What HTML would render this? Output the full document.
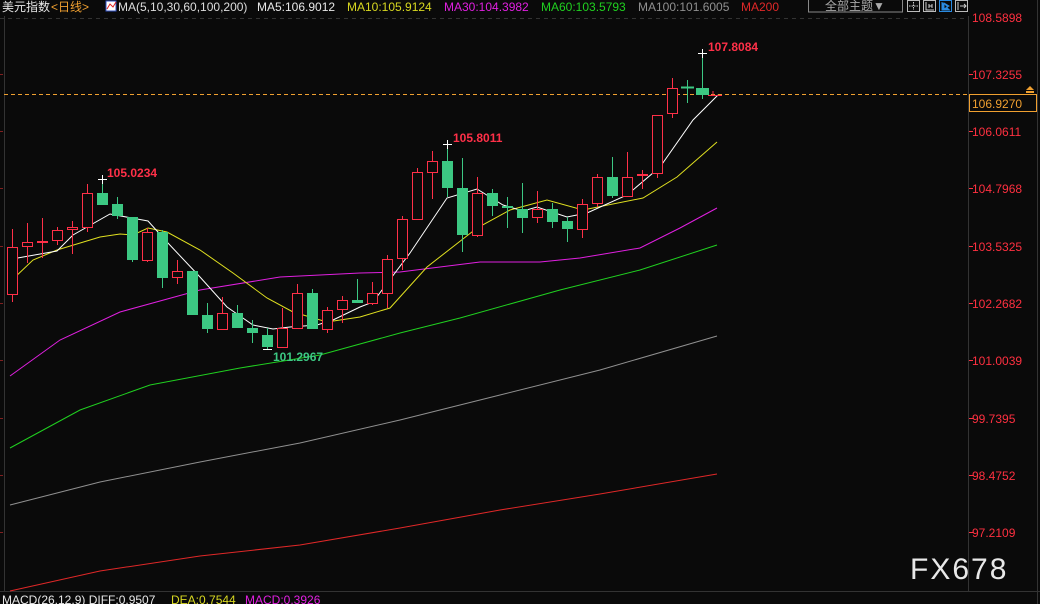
<!DOCTYPE html>
<html><head><meta charset="utf-8"><style>
html,body{margin:0;padding:0;background:#0a0a0a;width:1040px;height:604px;overflow:hidden}
svg{display:block}
text{font-family:"Liberation Sans","Noto Sans CJK SC",sans-serif}
</style></head><body>
<svg width="1040" height="604" viewBox="0 0 1040 604" xmlns="http://www.w3.org/2000/svg">
<rect width="1040" height="604" fill="#0a0a0a"/>
<!-- header -->
<text x="2" y="11" font-size="12" fill="#e8e8e8">美元指数</text>
<text x="51" y="11" font-size="12" fill="#f0a030">&lt;日线&gt;</text>
<rect x="106" y="1" width="10" height="10" fill="#fff" stroke="#3050c0"/>
<polyline points="107,9 110,4 113,7 116,2" fill="none" stroke="#e02020"/>
<text x="118" y="11" font-size="12" fill="#dddddd">MA(5,10,30,60,100,200)</text>
<text x="257" y="11" font-size="12" fill="#e8e8e8">MA5:106.9012</text>
<text x="347" y="11" font-size="12" fill="#d8d820">MA10:105.9124</text>
<text x="444" y="11" font-size="12" fill="#e020e0">MA30:104.3982</text>
<text x="541" y="11" font-size="12" fill="#20d020">MA60:103.5793</text>
<text x="638" y="11" font-size="12" fill="#909090">MA100:101.6005</text>
<text x="741" y="11" font-size="12" fill="#e02828">MA200</text>
<rect x="808.5" y="-1" width="94" height="13" fill="none" stroke="#888"/>
<text x="825" y="10" font-size="12" fill="#aaa">全部主题▼</text>
<rect x="907.5" y="0.5" width="12" height="11" fill="none" stroke="#bbb"/>
<path d="M913.5 2v8M909 6h9" stroke="#ccc" stroke-dasharray="1.5 1"/>
<rect x="923.5" y="0.5" width="12" height="11" fill="none" stroke="#bbb"/>
<path d="M926 2v8h8M929 4v4M932 4v4M929 6h3" stroke="#ccc" fill="none"/>
<rect x="939.5" y="0.5" width="12" height="11" fill="none" stroke="#2a8ae0"/>
<path d="M942 2v8h8M944 3l5 3-5 3z" stroke="#2a8ae0" fill="#2a8ae0"/>
<rect x="955.5" y="0.5" width="12" height="11" fill="none" stroke="#bbb"/>
<path d="M958 2v8M960 6h6M964 4l2 2-2 2" stroke="#ccc" fill="none"/>
<line x1="0" y1="18.5" x2="968" y2="18.5" stroke="#333" stroke-dasharray="4 4"/>
<!-- axes -->
<line x1="4.5" y1="16" x2="4.5" y2="591" stroke="#333"/>
<line x1="968.5" y1="16" x2="968.5" y2="591" stroke="#333"/>
<line x1="1037.5" y1="0" x2="1037.5" y2="604" stroke="#333"/>
<line x1="0" y1="591.5" x2="1040" y2="591.5" stroke="#333"/>
<g fill="#ff3040" font-size="12">
<text x="972" y="22">108.5898</text>
<text x="972" y="79">107.3255</text>
<text x="972" y="136">106.0611</text>
<text x="972" y="193">104.7968</text>
<text x="972" y="251">103.5325</text>
<text x="972" y="308">102.2682</text>
<text x="972" y="365">101.0039</text>
<text x="972" y="423">99.7395</text>
<text x="972" y="480">98.4752</text>
<text x="972" y="537">97.2109</text>
</g>
<g stroke="#ff3040"><path d="M969 74.5h4M969 131.5h4M969 188.5h4M969 246.5h4M969 303.5h4M969 360.5h4M969 418.5h4M969 475.5h4M969 532.5h4"/></g>
<g stroke="#802020"><path d="M0 74.5h3M0 131.5h3M0 188.5h3M0 246.5h3M0 303.5h3M0 360.5h3M0 418.5h3M0 475.5h3M0 532.5h3"/></g>
<!-- current price -->
<line x1="4" y1="94.5" x2="968" y2="94.5" stroke="#f0a030" stroke-dasharray="4 3"/>
<rect x="969.5" y="94.5" width="67" height="17" fill="#0a0a0a" stroke="#f0a030"/>
<text x="972" y="108" font-size="12" fill="#f0a030">106.9270</text>
<path d="M1030 86l4 4h-8zM1026 91h8v2h-8z" fill="#f0a030"/>
<!-- MA lines -->
<g fill="none" stroke-width="1">
<polyline stroke="#e02828" points="10,591 100,571 200,556 300,545 400,528 500,510 600,494 717,474"/>
<polyline stroke="#909090" points="10,505 100,482 200,462 300,443 400,420 500,395 600,370 717,336"/>
<polyline stroke="#20d020" points="10,448 80,410 150,385 240,368 320,355 400,333 460,318 560,290 640,270 717,245"/>
<polyline stroke="#e020e0" points="10,376 60,340 120,312 200,290 280,277 360,273 400,272 480,262 540,262 580,258 640,248 680,228 717,208"/>
<polyline stroke="#e0e020" points="12,280 33,260 57,250 100,237 120,234 133,235 148,228 167,232 200,250 233,273 267,298 293,312 327,322 360,317 390,308 427,267 477,228 510,210 547,200 583,210 643,198 677,177 717,142"/>
<polyline stroke="#ffffff" points="12,259 57,251 73,235 110,214 148,221 167,242 200,277 227,307 253,325 273,329 290,327 317,325 333,320 360,307 373,302 410,253 447,198 477,189 503,205 523,211 537,207 567,217 587,213 627,195 660,167 693,120 718,95"/>
</g>
<!-- candles -->
<g stroke="#ff3048" fill="#0a0a0a">
<line x1="12.5" y1="229" x2="12.5" y2="302"/><rect x="7.5" y="247.5" width="10" height="47"/>
<line x1="27.5" y1="223" x2="27.5" y2="263"/><rect x="22.5" y="242.5" width="10" height="4"/>
<line x1="42.5" y1="218" x2="42.5" y2="258"/><rect x="37.5" y="241.5" width="10" height="1"/>
<line x1="57.5" y1="227" x2="57.5" y2="245"/><rect x="52.5" y="230.5" width="10" height="10"/>
<line x1="72.5" y1="221" x2="72.5" y2="254"/><rect x="67.5" y="227.5" width="10" height="2"/>
<line x1="87.5" y1="184" x2="87.5" y2="232"/><rect x="82.5" y="193.5" width="10" height="34"/>
<line x1="147.5" y1="228" x2="147.5" y2="262"/><rect x="142.5" y="232.5" width="10" height="28"/>
<line x1="177.5" y1="260" x2="177.5" y2="284"/><rect x="172.5" y="271.5" width="10" height="6"/>
<line x1="222.5" y1="297" x2="222.5" y2="330"/><rect x="217.5" y="313.5" width="10" height="16"/>
<line x1="282.5" y1="308" x2="282.5" y2="347"/><rect x="277.5" y="328.5" width="10" height="19"/>
<line x1="297.5" y1="284" x2="297.5" y2="329"/><rect x="292.5" y="293.5" width="10" height="35"/>
<line x1="327.5" y1="307" x2="327.5" y2="333"/><rect x="322.5" y="310.5" width="10" height="19"/>
<line x1="342.5" y1="296" x2="342.5" y2="323"/><rect x="337.5" y="300.5" width="10" height="9"/>
<line x1="372.5" y1="282" x2="372.5" y2="305"/><rect x="367.5" y="293.5" width="10" height="10"/>
<line x1="387.5" y1="255" x2="387.5" y2="308"/><rect x="382.5" y="259.5" width="10" height="34"/>
<line x1="402.5" y1="216" x2="402.5" y2="270"/><rect x="397.5" y="219.5" width="10" height="39"/>
<line x1="417.5" y1="168" x2="417.5" y2="220"/><rect x="412.5" y="172.5" width="10" height="47"/>
<line x1="432.5" y1="151" x2="432.5" y2="199"/><rect x="427.5" y="161.5" width="10" height="11"/>
<line x1="477.5" y1="177" x2="477.5" y2="237"/><rect x="472.5" y="193.5" width="10" height="42"/>
<line x1="537.5" y1="191" x2="537.5" y2="223"/><rect x="532.5" y="209.5" width="10" height="8"/>
<line x1="582.5" y1="199" x2="582.5" y2="238"/><rect x="577.5" y="204.5" width="10" height="25"/>
<line x1="597.5" y1="174" x2="597.5" y2="207"/><rect x="592.5" y="177.5" width="10" height="26"/>
<line x1="627.5" y1="152" x2="627.5" y2="196"/><rect x="622.5" y="177.5" width="10" height="19"/>
<line x1="642.5" y1="170" x2="642.5" y2="189"/><rect x="637.5" y="174.5" width="10" height="1"/>
<line x1="657.5" y1="115" x2="657.5" y2="178"/><rect x="652.5" y="115.5" width="10" height="58"/>
<line x1="672.5" y1="78" x2="672.5" y2="118"/><rect x="667.5" y="88.5" width="10" height="25"/>
<line x1="713" y1="91" x2="713" y2="96"/><line x1="708" y1="95.5" x2="722" y2="95.5"/>
</g>
<g stroke="#3cc883" fill="#3cc883">
<line x1="102.5" y1="181" x2="102.5" y2="205"/><rect x="97.5" y="193.5" width="10" height="11"/>
<line x1="117.5" y1="197" x2="117.5" y2="219"/><rect x="112.5" y="204.5" width="10" height="11"/>
<line x1="132.5" y1="217" x2="132.5" y2="262"/><rect x="127.5" y="217.5" width="10" height="42"/>
<line x1="162.5" y1="230" x2="162.5" y2="288"/><rect x="157.5" y="232.5" width="10" height="45"/>
<line x1="192.5" y1="271" x2="192.5" y2="315"/><rect x="187.5" y="271.5" width="10" height="43"/>
<line x1="207.5" y1="303" x2="207.5" y2="333"/><rect x="202.5" y="315.5" width="10" height="13"/>
<line x1="237.5" y1="305" x2="237.5" y2="328"/><rect x="232.5" y="313.5" width="10" height="14"/>
<line x1="252.5" y1="320" x2="252.5" y2="343"/><rect x="247.5" y="328.5" width="10" height="4"/>
<line x1="267.5" y1="328" x2="267.5" y2="349"/><rect x="262.5" y="335.5" width="10" height="11"/>
<line x1="312.5" y1="289" x2="312.5" y2="329"/><rect x="307.5" y="293.5" width="10" height="35"/>
<line x1="357.5" y1="279" x2="357.5" y2="303"/><rect x="352.5" y="300.5" width="10" height="2"/>
<line x1="447.5" y1="144" x2="447.5" y2="197"/><rect x="442.5" y="161.5" width="10" height="26"/>
<line x1="462.5" y1="158" x2="462.5" y2="252"/><rect x="457.5" y="188.5" width="10" height="46"/>
<line x1="492.5" y1="189" x2="492.5" y2="216"/><rect x="487.5" y="193.5" width="10" height="12"/>
<line x1="507.5" y1="197" x2="507.5" y2="228"/><rect x="502.5" y="206.5" width="10" height="1"/>
<line x1="522.5" y1="183" x2="522.5" y2="233"/><rect x="517.5" y="209.5" width="10" height="8"/>
<line x1="552.5" y1="203" x2="552.5" y2="228"/><rect x="547.5" y="209.5" width="10" height="12"/>
<line x1="567.5" y1="217" x2="567.5" y2="242"/><rect x="562.5" y="221.5" width="10" height="7"/>
<line x1="612.5" y1="157" x2="612.5" y2="198"/><rect x="607.5" y="177.5" width="10" height="18"/>
<line x1="687.5" y1="80" x2="687.5" y2="103"/><rect x="681.5" y="87" width="12" height="1"/>
<line x1="702.5" y1="53" x2="702.5" y2="99"/><rect x="696.5" y="88.5" width="12" height="6"/>
</g>
<!-- extreme markers -->
<g stroke="#fff"><path d="M98 179.5h9M102.5 175v9M263 349.5h9M443 144.5h9M447.5 140v9M698 53.5h9M702.5 49v9"/></g>
<g font-size="12" font-weight="bold">
<text x="107" y="177" fill="#ff3048">105.0234</text>
<text x="273" y="361" fill="#3cc883">101.2967</text>
<text x="453" y="142" fill="#ff3048">105.8011</text>
<text x="708" y="51" fill="#ff3048">107.8084</text>
</g>
<!-- watermark -->
<text x="910" y="579" font-size="30" fill="#e8e8e8" letter-spacing="2">FX678</text>
<!-- bottom -->
<text x="2" y="604" font-size="12" fill="#e8e8e8">MACD(26,12,9) DIFF:0.9507</text>
<text x="171" y="604" font-size="12" fill="#d8d820">DEA:0.7544</text>
<text x="245" y="604" font-size="12" fill="#e020e0">MACD:0.3926</text>
</svg>
</body></html>
